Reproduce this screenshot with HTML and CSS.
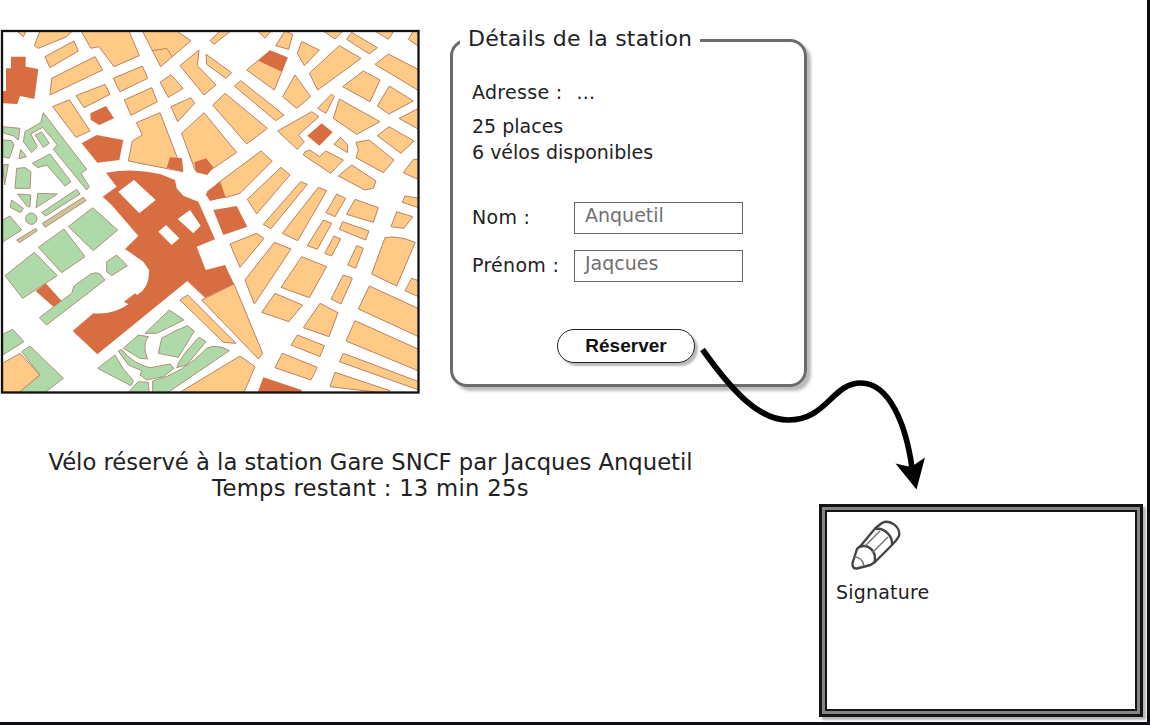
FILE: index.html
```html
<!DOCTYPE html>
<html lang="fr">
<head>
<meta charset="utf-8">
<title>Détails de la station</title>
<link rel="stylesheet" href="styles.css">
</head>
<body>
<main class="page">
  <div class="top">
    <svg class="map" viewBox="0 28 422 368" width="422" height="368">
      <defs><clipPath id="frame"><rect x="3" y="31" width="415" height="361"/></clipPath></defs>
      <g clip-path="url(#frame)">
        <!-- north-west blocks -->
        <g transform="translate(0 25) scale(.33333)">
          <g class="block">
            <path d="M120 18H217L200 35 115 70 103 62zM135 95 222 48 235 78 150 128zM155 160 285 95 308 135 150 210zM228 212 315 178 330 208 252 248zM158 245 208 224 270 318 228 337zM243 18H387L418 92 342 125 297 65 273 70zM340 160 427 123 443 160 360 200zM373 225 455 188 472 230 393 271zM427 18 530 18 573 47 482 125zM480 172 513 149 549 190 505 217zM513 245 573 218 584 235 533 290zM540 122 597 75 592 122 648 180 612 210zM618 88 695 143 678 160 620 118zM50 18H78L70 35zM409 293 480 263 548 440 385 408 397 348 427 330zM545 325 612 263 710 382 625 440 585 435z"/>
            <path d="M455 78 500 70 517 95"/>
          </g>
          <path class="building" d="M33 95H77V125L115 132 103 222 60 213 52 237 8 235V198H18V130H33zM271 265 318 243 342 280 298 300 272 285zM245 355 290 330 370 345 358 405 292 413zM510 397 546 400 550 440 500 428zM583 412 618 400 640 427 622 450 588 442z"/>
          <path class="building" fill-rule="evenodd" d="M318 443Q400 428 480 447L525 465 530 490 550 512 595 530 645 643 590 665 617 735 675 720 702 777 615 818 562 768 292 988 218 918 280 865Q340 870 385 838L372 830 405 805 412 810Q450 785 447 735L430 710 375 672 415 633 335 540 308 515 350 485zM355 500 402 465 467 525 418 565zM533 582 570 555 602 602 580 625zM475 620 498 600 538 640 515 660z"/>
          <path class="building" d="M617 508 660 470 677 516 630 528zM640 555 710 543 742 605 670 630z"/>
        </g>
        <!-- north-east blocks -->
        <g transform="translate(210 25) scale(.33333)">
          <path class="block" d="M0 47 30 18 62 18 12 58zM110 135 180 77 232 98 193 195zM225 18 248 28 236 73 197 62zM143 18H184L165 40zM275 50 328 75 283 122 262 85zM388 62 453 100 323 195 298 145zM425 22 502 68 478 87 410 43zM340 18H400L375 42zM495 18H552L535 43zM610 18H626V64L595 43zM535 87 626 134V197L495 118zM460 138 510 165 480 230 398 185zM538 183 610 228 537 267 502 243zM626 250V313L567 280zM388 222 510 290 440 328 370 280zM537 305 612 348 573 385 502 332zM610 403H626V464L580 443zM477 345 552 405 520 443 438 398 445 375 438 352zM425 420 498 468 490 490 465 495 385 453zM285 380 300 375 328 395 347 378 400 405 362 445 280 390zM392 337 412 358 413 383 372 358zM305 260 327 275 265 330 283 350 262 373 203 318zM365 207 373 215 348 265 323 250zM255 150 302 215 260 250 218 215zM92 167 222 270 197 287 73 183zM8 240 45 205 172 310 110 357zM153 378 187 408 90 505 47 518 20 477zM213 427 240 450 140 567 112 523zM272 470 292 478 183 611 160 598zM325 487 350 497 263 647 217 625zM380 507 407 520 375 575 348 563zM435 523 505 548 490 592 410 568zM585 513 626 520V548L577 532z"/>
          <path class="building" d="M145 107 180 77 232 98 215 140zM335 295 368 322 328 362 292 332zM20 477 32 472 47 518 0 525-10 500z"/>
        </g>
        <!-- park -->
        <g class="green" transform="translate(0 110) scale(.33333)">
          <path d="M130 8 260 178 243 190 268 230 260 240 160 118 172 104 128 52 92 72 112 110 95 128 70 95 75 65 122 38zM105 75 125 66 148 100 130 112zM97 160 150 132 213 215 195 228 140 165 113 173zM8 50 60 55 55 90 40 78 8 68zM8 90 35 92 42 105 28 145 8 140zM62 118 80 140 57 146zM50 175 75 173 93 185 90 235 45 235zM8 165 25 163 14 225zM53 252 92 255 90 290 82 290zM113 250 172 252 108 293zM125 308 230 238 240 252 137 318zM35 270 70 295 62 308 30 292zM8 330 30 318 65 360 8 396z"/>
          <path class="hedge" d="M127 340 250 262 258 272 135 352zM50 390 108 355 112 362 58 398z"/>
          <circle cx="94" cy="326" r="17"/>
        </g>
        <!-- south-west blocks -->
        <g transform="translate(0 205) scale(.33333)">
          <path class="building" d="M107 258 137 235 185 288 160 305z"/>
          <path class="green" d="M205 65 278 8 353 75 280 137zM115 127 192 72 255 155 185 203zM15 212 103 142 172 212 68 280zM320 170 350 150 382 182 335 212 320 200zM118 338 215 265 222 243 272 207Q288 200 300 207L315 225 140 360zM8 388 38 373 72 410 8 450zM65 440 90 423 190 520 135 562H55L120 510zM435 385 508 315 552 345 470 385zM485 400 525 378 562 362 583 378 535 457 475 445zM370 430 415 390 445 395Q425 420 443 462L420 460zM293 490 345 450 370 492 400 527 393 542zM355 438 365 433Q400 478 450 488L510 477 522 490 490 515 440 525 420 510 425 497 385 480zM530 488Q540 455 597 397L618 410 560 480zM458 528Q550 505 620 430Q650 415 688 437L500 565H458zM415 530 445 532 447 562H385z"/>
          <path class="block" d="M8 475 60 445 120 510 57 562H8zM540 285 563 270 708 415 670 412zM605 285 702 237 788 445 775 462zM540 562 720 453 765 485 732 562z"/>
        </g>
        <!-- south-east blocks -->
        <g transform="translate(210 205) scale(.33333)">
          <path class="block" d="M60 117 140 85 162 100 90 187zM105 225 193 112 243 132 133 297zM275 155 350 185 298 278 213 247zM195 265 277 300 237 350 155 322zM330 295 384 323 357 395 280 368zM262 390 343 422 330 455 243 420zM217 445 322 487 303 525 195 488zM340 45 365 55 322 133 292 122zM372 93 392 102 365 153 344 145zM398 50 477 78 467 105 388 73zM440 122 460 130 437 190 413 180zM400 210 427 220 393 297 363 282zM525 98Q560 90 616 112L560 243 485 207zM560 20 608 35 582 70 543 65zM605 220 626 227V275L585 257zM478 243 626 311V395L445 312zM435 347 626 433V498L408 408zM400 445 626 530V555L388 470zM375 502 540 557 530 565 360 545z"/>
          <path class="building" d="M160 517 275 555V565H142z"/>
        </g>
      </g>
      <rect class="map-frame" x="2" y="31" width="416.500" height="361.500"/>
    </svg>

    <form class="station">
      <h1 class="station-title"><span>Détails de la station</span></h1>
      <p class="address"><span>Adresse :</span><span>...</span></p>
      <p class="stock"><span>25 places</span><br><span>6 vélos disponibles</span></p>
      <div class="fields">
        <label for="nom">Nom :</label><div class="field" id="nom">Anquetil</div>
        <label for="prenom">Prénom :</label><div class="field" id="prenom">Jaqcues</div>
      </div>
      <button class="reserve" type="button">Réserver</button>
    </form>
  </div>

  <div class="bottom">
    <p class="message"><span>Vélo réservé à la station Gare SNCF par Jacques Anquetil</span><br><span class="remaining">Temps restant : 13 min 25s</span></p>
    <section class="signature">
      <svg class="pencil" viewBox="850 518 52 54" width="52" height="54">
        <path class="outline" d="M860.500 546 875.500 528 882 523C890 519 901 527 899 536Q897 540 892 545L875 562 870.500 565 857 568.500Q852 569 852.500 563L857 549Z"/>
        <path class="outline" d="M859.500 547C869 543 877 552 874.500 563M875.500 529C884 527 893 536 892 545"/>
        <path class="detail" d="M854.500 557Q862 557 864 566M865 546 880 531M872 553 888 537"/>
      </svg>
      <p class="signature-label">Signature</p>
    </section>
  </div>

  <svg class="arrow" viewBox="695 340 235 155" width="235" height="155">
    <path class="arrow-line" d="M702.500 349.500C732 391 759 420 788 420C827 420 832 383 861 383C889 383 906 424 912 468"/>
    <path d="M916.500 489.500 895.500 463.500 911 467 925 457.500Z"/>
  </svg>
</main>
</body>
</html>
```
FILE: styles.css
```css
* { box-sizing: border-box; }

body {
  margin: 0;
  background: #fff;
  color: #222;
  font-family: "DejaVu Sans", Verdana, sans-serif;
}

p, h1 { margin: 0; font-weight: 400; }

.page {
  position: relative;
  width: 1150px;
  height: 725px;
  overflow: hidden;
  border-right: 3px solid #0d0d12;
  border-bottom: 3px solid #0d0d12;
}

.top { display: flex; gap: 28px; height: 416px; padding-top: 28px; }
.map { flex: none; }
.map-frame { fill: none; stroke: #111; stroke-width: 2.3; }
.block { fill: #ffca85; stroke: #bd8060; stroke-width: 3; }
.building { fill: #d96d42; }
.green { fill: #aedaa9; stroke: #b0907a; stroke-width: 3; }
.hedge { fill: #cbc598; }

.station {
  display: flex;
  flex-direction: column;
  align-items: flex-start;
  width: 357px;
  height: 348px;
  margin-top: 11px;
  padding-left: 19px;
  border: 3px solid #6b6b6b;
  border-radius: 17px;
  box-shadow: 4px 4px 3px #bbb;
}

.station-title {
  width: 240px;
  height: 30px;
  margin: -17px 0 0 -12px;
  padding-left: 8px;
  background: #fff;
  font-size: 22px;
  letter-spacing: .2px;
  line-height: 28px;
  white-space: nowrap;
}

.address, .stock, .fields { font-size: 19px; line-height: 26px; white-space: nowrap; }
.address { display: flex; gap: 14px; margin-top: 24px; letter-spacing: .3px; }
.stock { margin-top: 8px; }

.fields {
  display: grid;
  grid-template-columns: 102px 169px;
  row-gap: 16px;
  margin-top: 37px;
}
.fields label { line-height: 31px; letter-spacing: .3px; }
.field {
  height: 32px;
  padding-left: 10px;
  border: 1px solid #666;
  color: #707070;
  line-height: 25px;
}

.reserve {
  width: 138px;
  height: 34px;
  margin: 47px 0 0 85px;
  border: 1.500px solid #222;
  border-radius: 17px;
  background: #fff;
  box-shadow: 3px 3px 2px #bbb;
  color: #111;
  font: bold 19px "Liberation Sans", Arial, sans-serif;
}

.bottom { display: flex; align-items: flex-start; }
.message {
  width: 741px;
  padding-top: 33px;
  font-size: 22.700px;
  line-height: 26px;
  text-align: center;
  white-space: nowrap;
}
.remaining { letter-spacing: .3px; }

.signature {
  width: 324px;
  height: 213px;
  margin: 88px 0 0 78px;
  padding: 7px 0 0 9px;
  border: 3px solid #151515;
  outline: 2px solid #151515;
  outline-offset: -8px;
  background: #fff;
  box-shadow: inset 0 0 0 3px #858585, 3px 3px 2px #b5b5b5;
}
.pencil { display: block; margin: 4px 0 0 19px; fill: none; stroke: #444; }
.outline { stroke-width: 2.4; stroke-linejoin: round; }
.detail { stroke: #777; stroke-width: 1.5; }
.signature-label { margin: 7px 0 0 5px; font-size: 19px; letter-spacing: .2px; line-height: 27px; }

.arrow { position: absolute; left: 695px; top: 340px; }
.arrow-line { fill: none; stroke: #000; stroke-width: 5.700; }
```
